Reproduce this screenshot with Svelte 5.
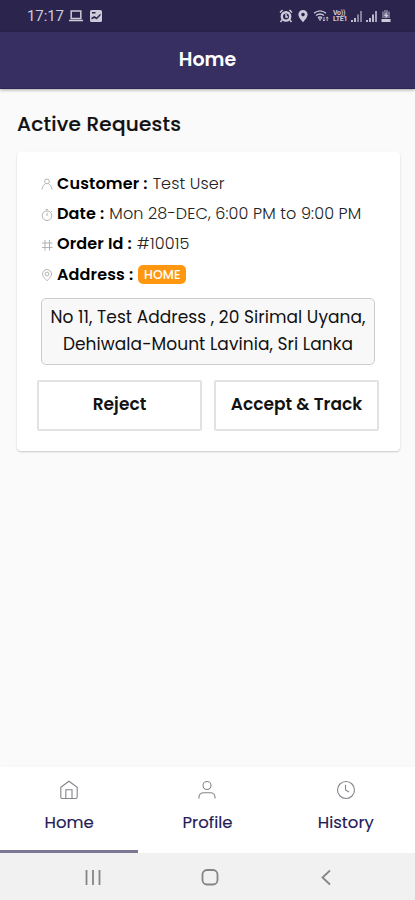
<script>
  let activeTab = "home";

  const request = {
    customer: "Test User",
    date: "Mon 28-DEC, 6:00 PM to 9:00 PM",
    orderId: "#10015",
    addressType: "HOME",
    address: ["No 11, Test Address , 20 Sirimal Uyana,", "Dehiwala-Mount Lavinia, Sri Lanka"],
  };

  const tabs = [
    { id: "home", label: "Home" },
    { id: "profile", label: "Profile" },
    { id: "history", label: "History" },
  ];

  const selectTab = (id) => (activeTab = id);
</script>

<div class="app">
  <div class="status">
    <span class="time">17:17</span>
    <svg class="laptop" width="16" height="14" viewBox="0 0 16 14">
      <path d="M3.2 2h9.6v7.5H3.2z M1 11.5h14" fill="none" stroke="currentColor" stroke-width="1.5" />
    </svg>
    <svg class="picture" width="14" height="14" viewBox="0 0 14 14">
      <rect x="1" y="1" width="12" height="12" rx="1.6" fill="currentColor" />
      <path d="M2.5 10.5V8.5l3-1.5 2 1.5 4-4v2l-4 4-2-1.5zM3 3h3.5v1.5H3z" fill="#2b244d" />
    </svg>

    <div class="status-right">
      <svg width="14" height="14" viewBox="0 0 14 14">
        <circle cx="7" cy="7.4" r="4.2" fill="none" stroke="currentColor" stroke-width="2.4" />
        <path d="M1 3.5 3.5 1M13 3.5 10.5 1M3 11 1.5 13M11 11l1.5 2M7 5v3h2" fill="none" stroke="currentColor" stroke-width="1.5" />
      </svg>
      <svg class="gap-pin" width="10" height="14" viewBox="0 0 10 14">
        <path
          d="M5 1a4.6 4.6 0 0 0-4.6 4.6C.4 9 5 13.2 5 13.2S9.6 9 9.6 5.6A4.6 4.6 0 0 0 5 1zm0 2.8a1.8 1.8 0 1 1 0 3.6 1.8 1.8 0 0 1 0-3.6z"
          fill="currentColor"
          fill-rule="evenodd"
        />
      </svg>
      <svg class="gap-wifi" width="17" height="14" viewBox="0 0 17 14">
        <path d="M1 4.2Q7-.5 13 4.2M3 6.5Q7 3.5 11 6.5M5 8.6Q7 7.2 9 8.6" fill="none" stroke="currentColor" stroke-width="1.4" />
        <path d="M7 11.5 5.5 9h3zM11 8v4M9.8 10.8 11 12l1.2-1.2M14.2 12V8M13 9.2 14.2 8l1.2 1.2" fill="none" stroke="currentColor" stroke-width="0.9" />
      </svg>
      <span class="volte"><span>Vo))</span><span>LTE1</span></span>
      <svg class="gap-signal" width="12" height="13" viewBox="0 0 12 13">
        <path d="M1 10v2M4 8v4" stroke="currentColor" stroke-width="1.8" />
        <path d="M7 4.5V12M10 1v11" stroke="currentColor" stroke-width="2" opacity="0.55" />
      </svg>
      <svg class="gap-signal" width="12" height="13" viewBox="0 0 12 13">
        <path d="M1 10v2M4 8v4M7 4.5V12" stroke="currentColor" stroke-width="1.8" />
        <path d="M10 1v11" stroke="currentColor" stroke-width="2" opacity="0.75" />
      </svg>
      <svg class="gap-signal" width="10" height="14" viewBox="0 0 10 14">
        <path d="M3 1h4v1.5h2V9H1V2.5h2z" fill="currentColor" opacity="0.45" />
        <path d="M.5 10h9v3h-9zM5.5 3 3 7h1.7v2.5L7.5 6H5.8z" fill="currentColor" />
      </svg>
    </div>
  </div>

  <header>Home</header>

  <main>
    <h1>Active Requests</h1>

    <section class="card">
      <div class="row">
        <svg class="row-icon" viewBox="0 0 12 12">
          <circle cx="6" cy="3.4" r="2.4" />
          <path d="M1 11.5c.3-3 1.8-4.7 3.4-5.7M11 11.5c-.3-3-1.8-4.7-3.4-5.7" />
        </svg>
        <b>Customer :</b><span>{request.customer}</span>
      </div>
      <div class="row">
        <svg class="row-icon" viewBox="0 0 12 12">
          <circle cx="6" cy="6.7" r="4.8" />
          <path d="M6 3.8V7M4.8.6h2.4M10 2l1 1" />
        </svg>
        <b>Date :</b><span>{request.date}</span>
      </div>
      <div class="row">
        <svg class="row-icon" viewBox="0 0 12 12">
          <path d="M4 1v10.5M8.5 1v10.5M1 4h10.5M1 8.5h10.5" />
        </svg>
        <b>Order Id :</b><span>{request.orderId}</span>
      </div>
      <div class="row">
        <svg class="row-icon" viewBox="0 0 12 12">
          <path d="M6 .6a4.5 4.5 0 0 0-4.5 4.5C1.5 8.3 6 11.7 6 11.7s4.5-3.4 4.5-6.6A4.5 4.5 0 0 0 6 .6z" />
          <circle cx="6" cy="5" r="1.9" />
        </svg>
        <b>Address :</b><span class="badge">{request.addressType}</span>
      </div>

      <div class="address">
        {#each request.address as line}
          <div>{line}</div>
        {/each}
      </div>

      <div class="actions">
        <button type="button">Reject</button>
        <button type="button">Accept &amp; Track</button>
      </div>
    </section>
  </main>

  <nav class="tabs">
    {#each tabs as tab (tab.id)}
      <button type="button" class="tab" class:active={tab.id === activeTab} on:click={() => selectTab(tab.id)}>
        <svg width="20" height="20" viewBox="0 0 20 20">
          {#if tab.id === "home"}
            <path d="M1.8 7.3 10 1.3l8.2 6V17a1.5 1.5 0 0 1-1.5 1.5H3.3A1.5 1.5 0 0 1 1.8 17zM6.8 18.5V9.8h6.2v8.7" />
          {:else if tab.id === "profile"}
            <circle cx="10" cy="5.5" r="4" />
            <path d="M2 18.5V17a4.5 4.5 0 0 1 4.5-4.3h7A4.5 4.5 0 0 1 18 17v1.5" />
          {:else}
            <circle cx="10" cy="10" r="8.5" />
            <path d="M9.5 4.8V10l3.5 2" />
          {/if}
        </svg>
        <span>{tab.label}</span>
      </button>
    {/each}
  </nav>

  <div class="system">
    <svg width="18" height="18" viewBox="0 0 18 18"><path d="M2.5 2v15M9 2v15M15.5 2v15" /></svg>
    <svg width="18" height="18" viewBox="0 0 18 18"><rect x="1.5" y="2" width="15" height="14.5" rx="4.5" /></svg>
    <svg width="18" height="18" viewBox="0 0 18 18"><path d="M13 2.5 5.5 9.5l7.5 7" /></svg>
  </div>
</div>

<style>
  :global(body) {
    margin: 0;
    background: #fafafa;
  }

  .app {
    display: flex;
    flex-direction: column;
    height: 900px;
    overflow: hidden;
    background: #fafafa;
    color: #111;
    font-family: Poppins, Inter, sans-serif;
  }

  button {
    font-family: inherit;
    color: inherit;
    cursor: pointer;
  }

  .status {
    box-sizing: border-box;
    flex: none;
    display: flex;
    align-items: center;
    height: 32px;
    padding: 0 24px 0 27px;
    background: #2b244d;
    color: #cdcad9;
  }

  .time {
    width: 37px;
    font-family: Roboto, sans-serif;
    font-size: 15px;
    letter-spacing: -0.1px;
    white-space: nowrap;
  }

  .laptop { margin-left: 4px; }
  .picture { margin-left: 5px; }

  .status-right {
    display: flex;
    align-items: center;
    margin-left: auto;
  }

  .gap-pin { margin-left: 5px; }
  .gap-wifi { margin-left: 5px; }
  .gap-signal { margin-left: 3px; }

  .volte {
    display: flex;
    flex-direction: column;
    width: 15px;
    margin-left: 3px;
    font: 700 7px/6.5px Roboto, sans-serif;
    letter-spacing: -0.3px;
  }

  header {
    box-sizing: border-box;
    flex: none;
    height: 57px;
    background: #372f61;
    border-bottom: 1px solid #2d2555;
    box-shadow: 0 1px 3px rgba(0, 0, 0, 0.35);
    color: #fff;
    font-size: 19px;
    font-weight: 600;
    line-height: 56px;
    text-align: center;
  }

  main {
    flex: 1;
    padding: 20px 15px 0 17px;
  }

  h1 {
    margin: 0;
    font-size: 20px;
    font-weight: 500;
    line-height: 30px;
    letter-spacing: 0.25px;
    white-space: nowrap;
    -webkit-text-stroke: 0.2px #111;
  }

  .card {
    box-sizing: border-box;
    height: 299px;
    margin-top: 13px;
    padding: 16px 21px 0 20px;
    background: #fff;
    border-radius: 4px;
    box-shadow: 0 1px 2px rgba(0, 0, 0, 0.2);
  }

  .row {
    display: flex;
    align-items: center;
    height: 30.4px;
    padding-left: 4px;
    font-size: 16px;
    white-space: nowrap;
  }

  .row b {
    margin-right: 5px;
    color: #000;
    font-weight: 600;
    letter-spacing: 0.15px;
  }

  .row span {
    color: #222;
    font-weight: 300;
    letter-spacing: 0.12px;
  }

  .row-icon {
    width: 12px;
    height: 12px;
    margin: 2px 4px 0 0;
    fill: none;
    stroke: #aaa;
    stroke-width: 0.9;
  }

  .row .badge {
    box-sizing: border-box;
    width: 48px;
    height: 19px;
    margin-top: 1px;
    border-radius: 5px;
    background: #ff9810;
    color: #fff;
    font-size: 12.5px;
    font-weight: 500;
    line-height: 20px;
    text-align: center;
  }

  .address {
    box-sizing: border-box;
    height: 67px;
    margin: 8px 4px 0;
    padding-top: 5px;
    border: 1px solid #ccc;
    border-radius: 5px;
    background: #f8f8f8;
    font-size: 17px;
    line-height: 27px;
    letter-spacing: 0.06px;
    text-align: center;
    white-space: nowrap;
  }

  .actions {
    display: flex;
    justify-content: space-between;
    margin-top: 15px;
  }

  .actions button {
    width: 165px;
    height: 51px;
    padding: 0 0 2px;
    border: 2px solid #e2e2e2;
    border-radius: 2px;
    background: #fff;
    font-size: 17px;
    font-weight: 600;
    letter-spacing: 0.05px;
    white-space: nowrap;
  }

  .tabs {
    flex: none;
    display: grid;
    grid-template-columns: repeat(3, 1fr);
    height: 86px;
    background: #fff;
    box-shadow: 0 -1px 5px rgba(0, 0, 0, 0.02);
  }

  .tab {
    display: flex;
    flex-direction: column;
    align-items: center;
    padding: 13px 0 0;
    border: 0;
    border-bottom: 3px solid transparent;
    background: none;
    color: #251b55;
    font-size: 16.5px;
    font-weight: 400;
    -webkit-text-stroke: 0.15px #251b55;
  }

  .tab.active { border-bottom-color: #7b7893; }

  .tab svg {
    fill: none;
    stroke: #85848d;
    stroke-width: 1.1;
  }

  .tab span {
    margin-top: 9px;
    line-height: 28px;
  }

  .system {
    box-sizing: border-box;
    flex: none;
    display: flex;
    align-items: center;
    justify-content: space-between;
    height: 47px;
    padding: 0 80px 0 84px;
    background: #f1f1f1;
  }

  .system svg {
    fill: none;
    stroke: #858585;
    stroke-width: 1.8;
  }
</style>
